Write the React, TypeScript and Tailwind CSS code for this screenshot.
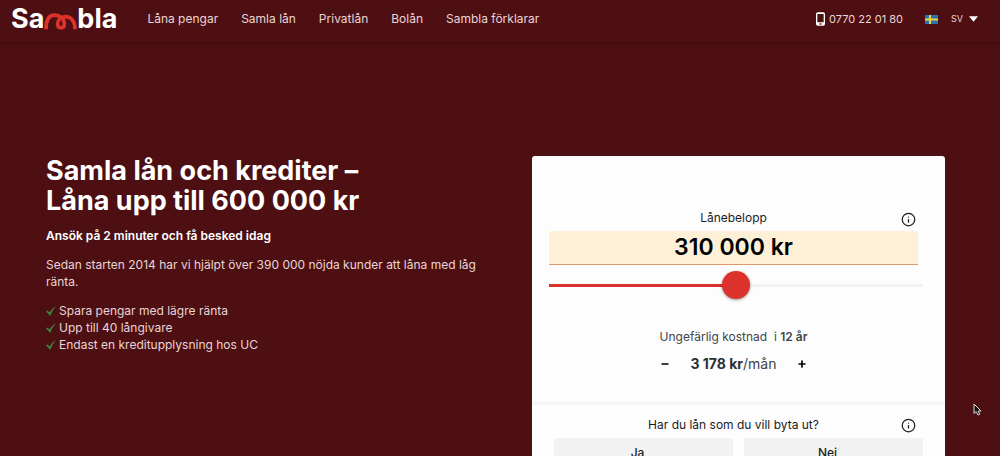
import { Info, Minus, Plus } from 'lucide-react';
import { useState } from 'react';

const navLinks = ['Låna pengar', 'Samla lån', 'Privatlån', 'Bolån', 'Sambla förklarar'];

const benefits = [
  'Spara pengar med lägre ränta',
  'Upp till 40 långivare',
  'Endast en kreditupplysning hos UC',
];

const Logo = () => (
  <a href="#" aria-label="Sambla" className="flex items-center text-[27px] leading-8 font-bold text-white">
    <span>Sa</span>
    <svg viewBox="0 0 34 22" className="h-[22px] w-[33px]" fill="none" stroke="#dc322c" strokeWidth="3.8" aria-hidden="true">
      <path d="M2 21.500C2.200 12 5 7 10.500 7 16.500 7 21 11 21 16c0 2.800-1.500 4.200-3.500 4.200S14 18.800 14 16c0-4 3.500-7.500 8-7.500 6 0 9.800 5 10 13" />
    </svg>
    <span>bla</span>
  </a>
);

const SwedishFlag = () => (
  <svg viewBox="0 0 13 9" className="h-[9px] w-[13px]" aria-hidden="true">
    <path fill="#2673b8" d="M0 0h13v9H0z" />
    <path fill="#f2d230" d="M4 0h2v9H4zM0 3.500h13v2H0z" />
  </svg>
);

const Header = () => (
  <header className="flex h-[42px] items-center bg-[#4d0f12] pb-1 pl-[11px] pr-[22px] shadow-[0_1px_3px_#380a0c]">
    <Logo />
    <nav className="ml-[30px] flex gap-[23px] text-xs text-[#ead5d6]">
      {navLinks.map((link) => (
        <a key={link} href="#">{link}</a>
      ))}
    </nav>
    <div className="ml-auto flex items-center text-[#ead5d6]">
      <a href="tel:0770220180" className="flex items-center gap-1 text-[11px]">
        <svg viewBox="0 0 10 15" className="h-[14px] w-[9px]" aria-hidden="true">
          <path
            fill="#fff"
            fillRule="evenodd"
            d="M2 0h6a2 2 0 0 1 2 2v11a2 2 0 0 1-2 2H2a2 2 0 0 1-2-2V2a2 2 0 0 1 2-2zM1.500 2v9h7V2zM4 12.200v1.600h2v-1.600z"
          />
        </svg>
        0770 22 01 80
      </a>
      <button type="button" className="ml-[22px] flex items-center text-[9px]">
        <SwedishFlag />
        <span className="ml-[13px]">SV</span>
        <svg viewBox="0 0 10 6" className="ml-[6px] h-[6px] w-[9px]" aria-hidden="true">
          <path fill="#fff" d="M0 0h10L5 6z" />
        </svg>
      </button>
    </div>
  </header>
);

const Intro = () => (
  <section className="text-xs text-[#ead5d6]">
    <h1 className="text-[27px] leading-[30px] font-bold text-white">
      Samla lån och krediter –<br />
      Låna upp till 600 000 kr
    </h1>
    <p className="mt-3 font-semibold text-white">Ansök på 2 minuter och få besked idag</p>
    <p className="mt-3 leading-[17px]">
      Sedan starten 2014 har vi hjälpt över 390 000 nöjda kunder att låna med låg ränta.
    </p>
    <ul className="mt-3 leading-[17px]">
      {benefits.map((benefit) => (
        <li key={benefit} className="flex items-center gap-[3px]">
          <svg viewBox="0 0 10 10" className="size-[10px]" aria-hidden="true">
            <path fill="#3c8a3c" d="M0 5.500 1.500 4.500 3.500 6.500Q6 2.500 10 0 6.500 4 4 10 2.500 7.500 0 5.500z" />
          </svg>
          {benefit}
        </li>
      ))}
    </ul>
  </section>
);

const LoanCard = () => {
  const [amount, setAmount] = useState(310000);
  const [years, setYears] = useState(12);
  const percent = ((amount - 20000) / 580000) * 100;

  return (
    <form className="rounded-[3px] bg-[#fdfdfd] pt-[52px] text-[#1c1c1e]">
      <div className="pr-[27px] pl-[17px]">
        <div className="grid grid-cols-[1fr_auto_1fr] items-center">
          <label htmlFor="amount" className="col-start-2 text-xs">Lånebelopp</label>
          <button type="button" aria-label="Information" className="justify-self-end pt-1 pr-[2px]">
            <Info className="size-[15px]" />
          </button>
        </div>
        <input
          id="amount"
          readOnly
          value={`${amount.toLocaleString('sv-SE').replace(/\s/g, ' ')} kr`}
          className="mt-1 block h-[34px] w-full rounded-t-[3px] border-b border-[#dc9a6c] bg-[#fef0d6] text-center text-[23px] font-semibold text-black outline-none"
        />
        <div className="-mr-[5px] mt-[6px] h-7">
          <input
            type="range"
            aria-label="Lånebelopp"
            min={20000}
            max={600000}
            step={5000}
            value={amount}
            onChange={(e) => setAmount(Number(e.target.value))}
            style={{ backgroundImage: `linear-gradient(to right, #d9322e ${percent}%, #f3f2f2 ${percent}%)` }}
            className="block h-7 w-full appearance-none bg-[length:100%_3px] bg-center bg-no-repeat [&::-webkit-slider-thumb]:size-7 [&::-webkit-slider-thumb]:appearance-none [&::-webkit-slider-thumb]:rounded-full [&::-webkit-slider-thumb]:bg-[#dc322c] [&::-webkit-slider-thumb]:shadow-[0_1px_3px_#00000066]"
          />
        </div>
        <p className="mt-[30px] text-center text-xs text-[#414449]">
          Ungefärlig kostnad&nbsp; i <strong className="font-semibold">{years} år</strong>
        </p>
        <div className="mt-[9px] flex items-center justify-center gap-5">
          <button type="button" aria-label="Kortare löptid" onClick={() => setYears(years - 1)}>
            <Minus className="size-[10px] text-black" strokeWidth={4} />
          </button>
          <output className="text-sm text-[#414449]">
            <strong className="text-[#2c2f35]">3 178 kr</strong>/mån
          </output>
          <button type="button" aria-label="Längre löptid" onClick={() => setYears(years + 1)}>
            <Plus className="size-[10px] text-black" strokeWidth={4} />
          </button>
        </div>
      </div>
      <div className="mt-[27px] border-t-4 border-[#f6f6f6] pt-3 pr-[22px] pl-[22px]">
        <div className="-ml-[5px] mr-[5px] grid grid-cols-[1fr_auto_1fr] items-center">
          <span className="col-start-2 text-xs">Har du lån som du vill byta ut?</span>
          <button type="button" aria-label="Information" className="justify-self-end pr-[2px]">
            <Info className="size-[15px]" />
          </button>
        </div>
        <div className="mt-[5px] grid grid-cols-2 gap-[11px] pb-6 text-xs font-medium">
          <button type="button" className="h-[30px] rounded-[3px] bg-[#f2f2f2] pr-3">Ja</button>
          <button type="button" className="h-[30px] rounded-[3px] bg-[#f2f2f2] pr-3">Nej</button>
        </div>
      </div>
    </form>
  );
};

const App = () => {
  return (
    <div className="relative h-screen overflow-hidden bg-[#4d0f12] font-['Inter',sans-serif]">
      <Header />
      <main className="grid grid-cols-[432fr_413fr] gap-[54px] pt-[114px] pr-[55px] pl-[46px]">
        <Intro />
        <LoanCard />
      </main>
      <svg viewBox="0 0 9 13" className="absolute top-[403px] right-[18px] h-[13px] w-[9px]" aria-hidden="true">
        <path fill="#111" stroke="#ddd" d="M1 1v9.500l2.200-2L5 12l1.700-.8L5.200 8H8z" />
      </svg>
    </div>
  );
};

export default App;
